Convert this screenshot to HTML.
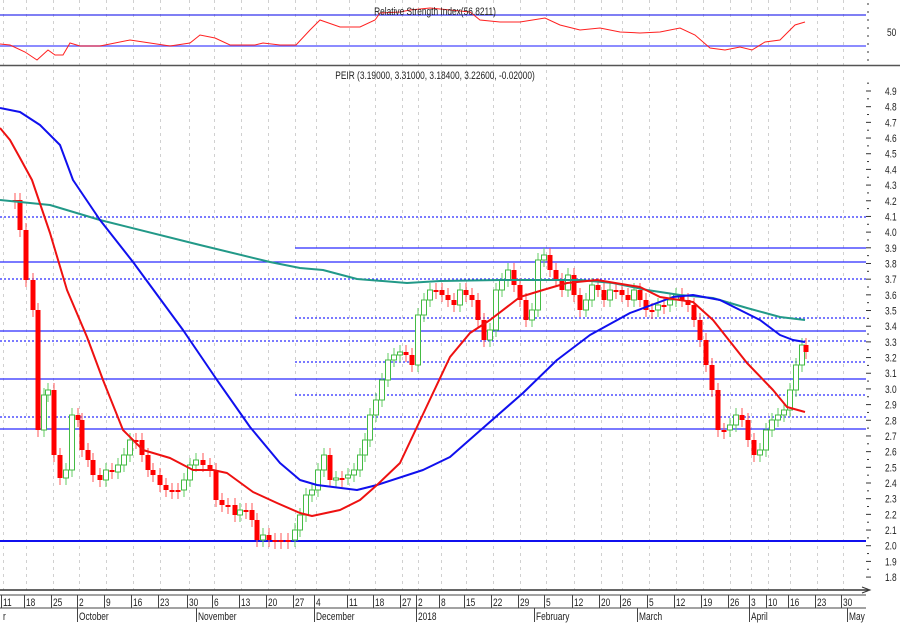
<!DOCTYPE html>
<html><head><meta charset="utf-8"><style>
html,body{margin:0;padding:0;background:#fff;width:900px;height:624px;overflow:hidden}
svg{display:block}
text{font-family:"Liberation Sans",sans-serif;font-size:11px;fill:#222}
</style></head><body>
<svg id="s" width="900" height="624" xmlns="http://www.w3.org/2000/svg"></svg>
<script>
const S=document.getElementById('s');let h='';
const Y=p=>91+(4.9-p)*156.8;
const T=(x,y,s,a)=>`<text transform="translate(${x},${y}) scale(0.76,1)"${a?' text-anchor="'+a+'"':''}>${s}</text>`;
const ticks=[[3,'11'],[26,'18'],[53,'25'],[79,'2'],[106,'9'],[133,'16'],[160,'23'],[189,'30'],[214,'6'],[241,'13'],[268,'20'],[295,'27'],[316,'4'],[349,'11'],[375,'18'],[402,'27'],[418,'2'],[441,'8'],[466,'15'],[493,'22'],[520,'29'],[546,'5'],[574,'12'],[601,'20'],[622,'26'],[649,'5'],[676,'12'],[703,'19'],[730,'26'],[751,'3'],[768,'10'],[790,'16'],[817,'23'],[843,'30']];
ticks.forEach(t=>{h+=`<line x1="${t[0]+.5}" y1="0" x2="${t[0]+.5}" y2="590" stroke="#d0d0d0" stroke-dasharray="3,4"/>`;});
h+=`<line x1="0" y1="15" x2="866" y2="15" stroke="#3333ee" stroke-width="1.2"/><line x1="0" y1="46" x2="866" y2="46" stroke="#6666ff" stroke-width="1.5"/>`;
const rsi=[[0,44],[10,45],[25,52],[37,60],[48,50],[55,55],[63,55],[70,43],[80,46],[100,46],[110,44],[130,40],[150,43],[170,46],[190,43],[200,35],[215,38],[230,45],[245,45],[255,45],[263,43],[280,45],[296,45],[310,30],[320,20],[340,27],[350,27],[360,27],[375,20],[380,13],[400,12],[410,10],[430,8],[450,10],[470,12],[480,20],[500,22],[520,22],[545,18],[560,25],[580,30],[600,28],[620,32],[640,33],[660,32],[680,28],[695,35],[710,48],[725,50],[740,47],[752,50],[765,42],[780,40],[795,25],[805,22]];
h+=`<polyline fill="none" stroke="#ff2020" points="${rsi.map(p=>p.join(',')).join(' ')}"/>`;
h+=T(435,15,'Relative Strength Index(56.8211)','middle');
h+=T(887,36,'50');
h+=`<line x1="0" y1="65.5" x2="900" y2="65.5" stroke="#555" stroke-width="1.5"/>`;
h+=T(435,79,'PEIR (3.19000, 3.31000, 3.18400, 3.22600, -0.02000)','middle');
[[0,217,1],[0,262,0],[0,279,1],[0,331,0],[0,341,1],[0,379,0],[0,417,1],[0,429,0],[295,248,0],[295,318,1],[295,362,1],[295,395,1]].forEach(l=>{h+=`<line x1="${l[0]}" y1="${l[1]}" x2="866" y2="${l[1]}" stroke="#2a2aff" stroke-width="1.3" ${l[2]?'stroke-dasharray="2,2"':''}/>`;});
h+=`<line x1="0" y1="541" x2="866" y2="541" stroke="#1010ee" stroke-width="2"/>`;
const P=[[8,200],[15,200],[20,230],[26,280],[33,310],[38,430],[44,395],[48,390],[54,455],[60,478],[66,470],[72,415],[78,420],[82,450],[88,460],[93,475],[100,480],[106,470],[112,472],[118,465],[124,455],[130,440],[136,440],[142,455],[148,470],[153,475],[160,485],[166,490],[172,490],[178,490],[184,480],[190,465],[196,460],[203,465],[210,470],[216,500],[222,505],[228,505],[235,515],[240,510],[246,510],[252,520],[257,540],[263,535],[269,540],[275,540],[281,540],[288,540],[295,530],[300,515],[306,495],[312,490],[318,470],[324,455],[330,480],[336,478],[342,478],[348,475],[354,470],[360,455],[365,440],[370,415],[376,400],[382,380],[388,360],[394,355],[400,352],[406,355],[412,365],[418,315],[424,300],[430,290],[436,290],[442,295],[448,300],[454,305],[460,290],[466,295],[472,300],[478,320],[484,340],[490,330],[496,290],[502,280],[508,270],[514,285],[520,300],[526,320],[532,310],[538,260],[544,255],[550,270],[556,280],[562,290],[568,275],[574,295],[580,310],[586,300],[592,285],[598,290],[604,300],[610,290],[616,290],[622,295],[628,300],[634,290],[640,300],[646,310],[652,310],[658,305],[664,305],[670,300],[676,295],[682,300],[688,305],[694,320],[700,340],[706,365],[712,390],[718,430],[724,430],[730,425],[736,415],[742,420],[748,440],[754,455],[760,450],[766,430],[772,420],[778,415],[784,410],[790,390],[796,365],[802,345],[806,352]];
for(let i=1;i<P.length;i++){const x=P[i][0],o=P[i-1][1],c=P[i][1];const up=c<o;const t=Math.min(o,c),b=Math.max(o,c,t+2);
h+=`<line x1="${x}" y1="${t-7}" x2="${x}" y2="${b+7}" stroke="${up?'#66cc66':'#ff5555'}"/>`;
h+= up?`<rect x="${x-2.5}" y="${t}" width="5" height="${b-t}" fill="#fff" stroke="#44bb44"/>`:`<rect x="${x-2.5}" y="${t}" width="5" height="${b-t}" fill="#ff0000"/>`;}
const line=(pts,c)=>{h+=`<polyline fill="none" stroke="${c}" stroke-width="2" stroke-linejoin="round" points="${pts.map(p=>p.join(',')).join(' ')}"/>`;};
line([[0,200],[50,205],[100,220],[200,245],[270,262],[300,268],[323,270],[357,279],[407,283],[440,281],[500,280],[580,280],[613,283],[647,290],[680,295],[713,298],[747,308],[780,317],[805,320]],'#229988');
line([[0,108],[20,112],[40,125],[60,145],[73,180],[100,220],[133,262],[183,330],[217,380],[250,427],[280,463],[300,480],[317,485],[357,490],[377,485],[423,470],[450,457],[483,428],[523,393],[557,360],[590,335],[630,313],[673,297],[693,295],[720,300],[760,320],[780,335],[793,340],[805,342]],'#1010ee');
line([[0,128],[10,140],[20,158],[32,180],[50,233],[67,290],[87,337],[103,380],[123,430],[143,450],[170,458],[193,470],[213,470],[227,473],[253,492],[277,503],[300,513],[312,516],[340,510],[360,500],[377,485],[400,463],[433,393],[450,357],[470,333],[490,320],[520,297],[543,290],[567,283],[597,280],[640,287],[660,297],[693,302],[713,320],[747,363],[773,390],[787,407],[805,412]],'#ee1111');
for(let p=1.8;p<=4.95;p+=0.05){const y=Y(p);const maj=Math.round(p*20)%2==0;h+=`<line x1="${maj?866:867}" y1="${y}" x2="${maj?871:869}" y2="${y}" stroke="#333"/>`;if(maj)h+=T(885,y+4,p.toFixed(1));}
for(let y=4;y<62;y+=8)h+=`<line x1="867" y1="${y}" x2="869" y2="${y}" stroke="#333"/>`;
h+=`<line x1="0" y1="590" x2="868" y2="590" stroke="#333" stroke-width="1.5"/><path d="M862,587 L870,590 L862,593" fill="none" stroke="#333"/>`;
h+=`<line x1="0" y1="595" x2="866" y2="595" stroke="#444"/><line x1="0" y1="608" x2="866" y2="608" stroke="#444"/>`;
ticks.forEach(t=>{h+=`<line x1="${t[0]-1.5}" y1="595" x2="${t[0]-1.5}" y2="608" stroke="#444"/>`+T(t[0],606,t[1]);});
[[3,'r',0],[79,'October',1],[198,'November',1],[316,'December',1],[418,'2018',1],[536,'February',1],[639,'March',1],[751,'April',1],[849,'May',1]].forEach(m=>{if(m[2])h+=`<line x1="${m[0]-1.5}" y1="608" x2="${m[0]-1.5}" y2="622" stroke="#444"/>`;h+=T(m[0],620,m[1]);});
S.innerHTML=h;
</script>
</body></html>
